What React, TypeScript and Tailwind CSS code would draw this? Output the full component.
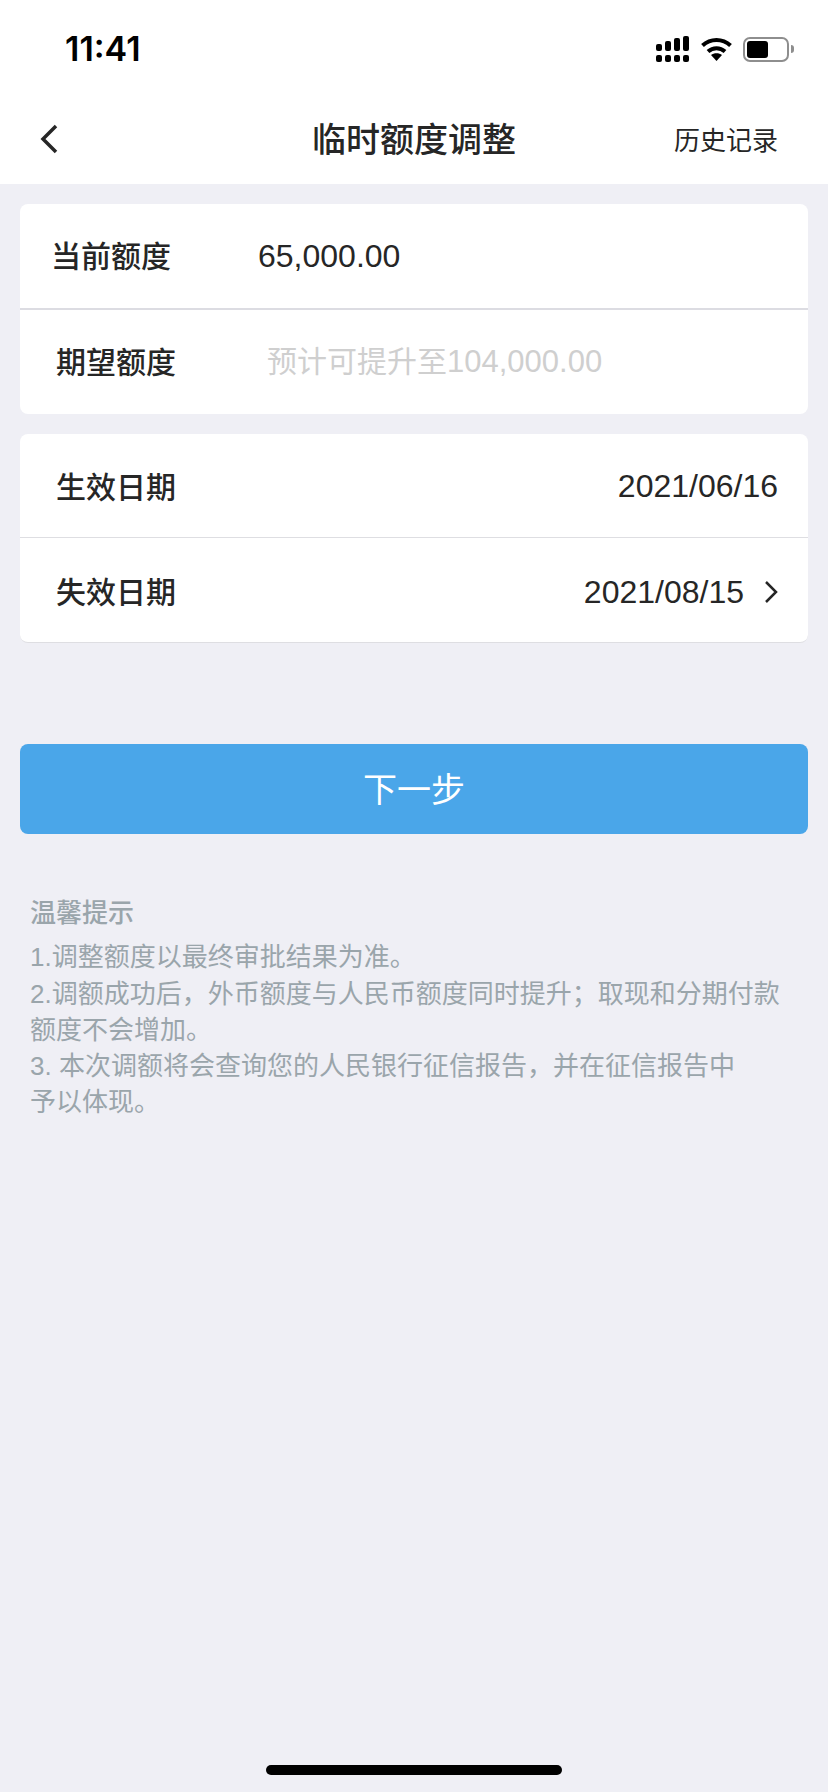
const font = "[font-family:'Liberation_Sans','Noto_Sans_CJK_SC',sans-serif]";
const cjk = "[font-family:'Noto_Sans_CJK_SC',sans-serif]";

function StatusIcons() {
    return (
        <div className="flex items-center">
            <svg width="33" height="26" viewBox="0 0 33 26" fill="#000">
                <rect x="0" y="8" width="6" height="7" rx="2" />
                <rect x="9" y="5" width="6" height="10" rx="2" />
                <rect x="18" y="2" width="6" height="13" rx="2" />
                <rect x="27" y="0" width="6" height="15" rx="2" />
                <rect x="0" y="19" width="6" height="7" rx="2" />
                <rect x="9" y="19" width="6" height="7" rx="2" />
                <rect x="18" y="19" width="6" height="7" rx="2" />
                <rect x="27" y="19" width="6" height="7" rx="2" />
            </svg>
            <svg className="ml-[12px]" width="31" height="24" viewBox="0 0 31 24" fill="none" stroke="#000" strokeWidth="4">
                <path d="M1.500 8.500C9.500 1 21.500 1 29.500 8.500" />
                <path d="M7 14.500C12 10 19 10 24 14.500" />
                <path d="M10 18L15.500 24L21 18C18 15.500 13 15.500 10 18Z" fill="#000" stroke="none" />
            </svg>
            <div className="ml-[11px] flex items-center">
                <div className="flex h-[25px] w-[46px] items-center rounded-[7px] border-2 border-[#8e8e8e] p-[2px]">
                    <div className="h-[17px] w-[21px] rounded-[3px] bg-black" />
                </div>
                <div className="ml-[2px] h-[8px] w-[3px] rounded-r-full bg-[#8e8e8e]" />
            </div>
        </div>
    );
}

function BackIcon() {
    return (
        <svg width="18" height="30" viewBox="0 0 18 30" fill="none" stroke="#262626" strokeWidth="3.500">
            <path d="M16 2L3 15L16 28" />
        </svg>
    );
}

function ArrowIcon() {
    return (
        <svg width="14" height="24" viewBox="0 0 14 24" fill="none" stroke="#262626" strokeWidth="2.500">
            <path d="M2 2L12 12L2 22" />
        </svg>
    );
}

function Label({ text, className }: { text: string; className?: string }) {
    return <span className={`${cjk} text-[30px] font-medium text-[#262626] ${className ?? ''}`}>{text}</span>;
}

export default function App() {
    return (
        <div className={`flex min-h-[1792px] w-[828px] flex-col bg-[#efeff5] ${font}`}>
            <div className="bg-white">
                <div className="flex h-[90px] items-center justify-between pl-[65px] pr-[34px] pt-[8px]">
                    <span className="text-[34px] font-semibold leading-none text-black [font-family:'Inter',sans-serif]">11:41</span>
                    <StatusIcons />
                </div>
                <div className="relative flex h-[94px] items-center justify-between pl-[40px] pr-[50px] pt-[4px]">
                    <BackIcon />
                    <span className={`absolute left-0 right-0 pb-[4px] text-center text-[34px] font-medium text-[#262626] ${cjk}`}>临时额度调整</span>
                    <span className={`pb-[2px] text-[26px] text-[#262626] ${cjk}`}>历史记录</span>
                </div>
            </div>

            <div className="mx-[20px] mt-[20px] overflow-hidden rounded-[8px] bg-white">
                <div className="flex h-[106px] items-center border-b-2 border-[#dcdce2] pl-[31px]">
                    <Label text="当前额度" className="w-[207px] pb-[3px]" />
                    <span className="text-[32px] text-[#262626]">65,000.00</span>
                </div>
                <div className="flex h-[104px] items-center pl-[36px]">
                    <Label text="期望额度" className="w-[211px] pb-[4px]" />
                    <span className="pt-[1px] text-[30px] text-[#cfcfcf]">预计可提升至<span className="text-[31px]">104,000.00</span></span>
                </div>
            </div>

            <div className="mx-[20px] mt-[20px] overflow-hidden rounded-[8px] border-b border-[#dedee2] bg-white">
                <div className="flex h-[104px] items-center justify-between border-b border-[#dedee2] pl-[36px] pr-[30px]">
                    <Label text="生效日期" />
                    <span className="text-[32px] text-[#262626]">2021/06/16</span>
                </div>
                <div className="flex h-[104px] items-center justify-between pl-[36px] pr-[30px]">
                    <Label text="失效日期" />
                    <span className="flex items-center gap-[20px] pt-[3px] text-[32px] text-[#262626]">
                        2021/08/15
                        <ArrowIcon />
                    </span>
                </div>
            </div>

            <button className={`mx-[20px] mt-[101px] h-[90px] rounded-[8px] bg-[#4aa6e9] pb-[4px] text-[34px] text-white ${cjk}`}>下一步</button>

            <div className="mx-[30px] mt-[59px] text-[26px] leading-[36.3px] text-[#9aa5ab]">
                <div className={`mb-[10px] font-medium ${cjk}`}>温馨提示</div>
                <p>1.调整额度以最终审批结果为准。</p>
                <p className="pr-[10px]">2.调额成功后，外币额度与人民币额度同时提升；取现和分期付款额度不会增加。</p>
                <p className="pr-[40px]">3. 本次调额将会查询您的人民银行征信报告，并在征信报告中予以体现。</p>
            </div>

            <div className="mt-auto flex justify-center pb-[17px]">
                <div className="h-[10px] w-[296px] rounded-full bg-black" />
            </div>
        </div>
    );
}
